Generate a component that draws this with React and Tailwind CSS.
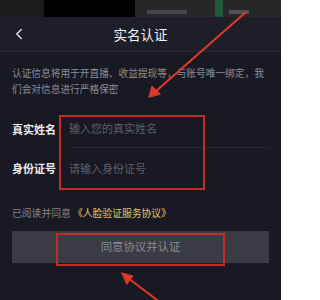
import { ChevronLeft } from 'lucide-react';

const FONT = { fontFamily: '"Noto Sans CJK SC", "Noto Sans", sans-serif' };

function TopStrip() {
  return (
    <div className="flex h-[17px] bg-black">
      <div className="w-[44px] bg-[#1c1c1e]" />
      <div className="w-[91px]" />
      <div className="flex flex-1 items-end bg-[#262729]">
        <div className="h-[4px] w-[40px] ml-[12px] mb-[3px] bg-[#45464a]" />
        <div className="h-full w-[8px] ml-[28px] bg-[#1f5a3c]" />
        <div className="h-[4px] w-[20px] ml-[6px] mb-[3px] bg-[#505155]" />
      </div>
    </div>
  );
}

function Arrows() {
  return (
    <svg className="absolute inset-0 pointer-events-none" width="281" height="300" viewBox="0 0 281 300">
      <g stroke="#e2392b" strokeWidth="2" strokeLinecap="round" fill="#e2392b">
        <line x1="246" y1="12" x2="155" y2="92" />
        <polygon points="149,97 152,86 160,94" strokeWidth="1" />
        <line x1="157" y1="300" x2="128" y2="278" />
        <polygon points="122,273 133,276 127,284" strokeWidth="1" />
      </g>
    </svg>
  );
}

export default function App() {
  return (
    <div className="relative w-[281px] h-[300px] overflow-hidden bg-[#181923]" style={FONT}>
      <TopStrip />

      {/* Header */}
      <div className="relative flex items-center justify-center h-[35px] bg-[#1d1e28] border-b border-[#272833]">
        <ChevronLeft className="absolute left-[10px] w-[18px] h-[18px] text-[#e6e6ea]" strokeWidth={1.8} />
        <h1 className="text-[13.5px] text-[#f2f2f4]">实名认证</h1>
      </div>

      {/* Notice */}
      <p className="px-[12px] pt-[13px] text-[9.7px] leading-[16px] text-[#8d8e96]">
        认证信息将用于开直播、收益提现等，与账号唯一绑定，我们会对信息进行严格保密
      </p>

      {/* Form */}
      <div className="mt-[13px] pl-[12px] pr-[12px]">
        <div className="flex items-center h-[38px]">
          <span className="w-[57px] text-[11px] font-bold text-[#ececef]">真实姓名</span>
          <div className="flex-1 h-full flex items-center border-b border-[#262731]">
            <span className="text-[11px] text-[#5f6069]">输入您的真实姓名</span>
          </div>
        </div>
        <div className="flex items-center h-[40px]">
          <span className="w-[57px] text-[11px] font-bold text-[#ececef]">身份证号</span>
          <span className="text-[11px] text-[#5f6069]">请输入身份证号</span>
        </div>
      </div>

      {/* Agreement */}
      <p className="mt-[17px] px-[12px] text-[9.8px] leading-[16px] text-[#83848c]">
        已阅读并同意 <span className="text-[#e6c36a]">《人脸验证服务协议》</span>
      </p>

      <div className="mt-[10px] mx-[12px] h-[32px] flex items-center justify-center bg-[#3a3b45]">
        <span className="text-[11.4px] text-[#8a8b93]">同意协议并认证</span>
      </div>

      {/* Annotations */}
      <div className="absolute left-[59px] top-[115px] w-[146px] h-[75px] border-2 border-[#c42d25]" />
      <div className="absolute left-[56px] top-[233px] w-[169px] h-[33px] border-2 border-[#c42d25]" />
      <Arrows />
    </div>
  );
}
